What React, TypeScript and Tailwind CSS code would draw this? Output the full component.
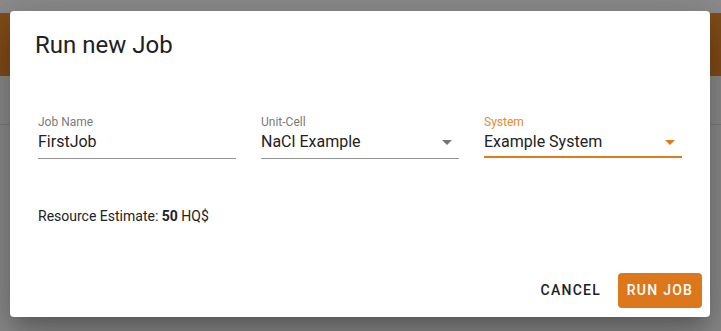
const ORANGE = "#e07b1c";

type FieldProps = {
  label: string;
  value: string;
  select?: boolean;
  focused?: boolean;
};

function Caret({ color }: { color: string }) {
  return (
    <svg width="24" height="24" viewBox="0 0 24 24" className="shrink-0">
      <path d="M7 10l5 5 5-5z" fill={color} />
    </svg>
  );
}

function Field({ label, value, select, focused }: FieldProps) {
  return (
    <div className="flex flex-col">
      <span
        className={
          focused
            ? "text-[12px] leading-[14px] text-[#e8892b]"
            : "text-[12px] leading-[14px] text-[#7a7a7a]"
        }
      >
        {label}
      </span>
      <div
        className={
          focused
            ? "mt-[3px] flex h-[26px] items-start justify-between border-b-2 border-[#e07b1c]"
            : "mt-[3px] flex h-[27px] items-start justify-between border-b border-[#949494]"
        }
      >
        <span className="text-[16px] leading-[19px] text-[#222]">{value}</span>
        {select && (
          <div className="-mt-[2.5px]">
            <Caret color={focused ? ORANGE : "#757575"} />
          </div>
        )}
      </div>
    </div>
  );
}

export default function App() {
  return (
    <div
      className="relative h-[331px] w-[721px] overflow-hidden bg-[#8a8a8a]"
      style={{ fontFamily: "Roboto, 'Liberation Sans', sans-serif" }}
    >
      <div className="h-[13px] bg-[#8b8b8b]" />
      <div className="h-[63px] bg-[#804c18]" />
      <div className="h-[48px]" />
      <div className="h-px bg-[#7c7c7c]" />

      <div className="absolute left-[10px] top-[11px] flex h-[306px] w-[700px] flex-col rounded bg-white shadow-[0_11px_15px_-7px_rgba(0,0,0,0.2),0_24px_38px_3px_rgba(0,0,0,0.14),0_9px_46px_8px_rgba(0,0,0,0.12)]">
        <h2 className="pl-[25px] pt-[18px] text-[24px] leading-[32px] font-normal text-[#212121]">
          Run new Job
        </h2>

        <div className="mt-[54px] grid grid-cols-3 gap-x-[25px] px-[28px]">
          <Field label="Job Name" value="FirstJob" />
          <Field label="Unit-Cell" value="NaCl Example" select />
          <Field label="System" value="Example System" select focused />
        </div>

        <p className="mt-[47px] px-[28px] text-[14px] leading-[20px] text-[#222]">
          Resource Estimate: <b className="font-bold">50</b> HQ$
        </p>

        <div className="mt-auto flex items-center justify-end gap-[8px] pb-[9px] pr-[8px]">
          <button
            type="button"
            className="h-[35px] rounded px-[9px] text-[14px] font-medium tracking-[1.25px] text-[#212121]"
          >
            CANCEL
          </button>
          <button
            type="button"
            className="h-[35px] w-[84px] rounded bg-[#dc771b] text-[14px] font-medium tracking-[1.25px] text-white"
          >
            RUN JOB
          </button>
        </div>
      </div>
    </div>
  );
}
